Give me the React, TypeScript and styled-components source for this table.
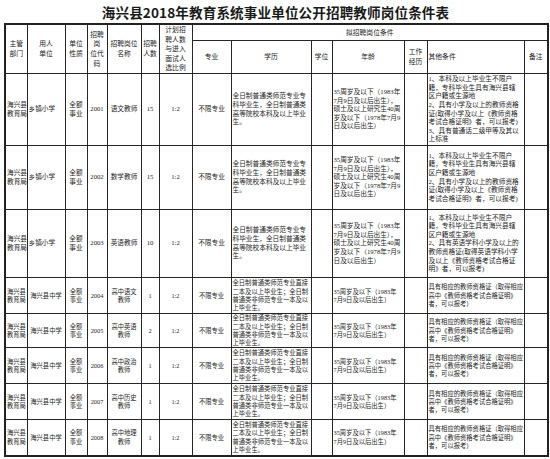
import React from "react";
import styled, { createGlobalStyle } from "styled-components";

const Global = createGlobalStyle`
  html, body { margin: 0; padding: 0; background: #fff; }
  body { width: 550px; height: 459px; overflow: hidden; }
`;

const Page = styled.div`
  width: 550px;
  height: 459px;
  display: flex;
  flex-direction: column;
  align-items: flex-start;
  padding-left: 4px;
  box-sizing: border-box;
`;

const Title = styled.h1`
  margin: 0;
  width: 543px;
  height: 23px;
  line-height: 24px;
  text-align: center;
  font-family: "Noto Sans CJK SC", sans-serif;
  font-weight: 700;
  font-size: 13.6px;
  color: #1a1a1a;
  letter-spacing: 0.1px;
`;

const Table = styled.table`
  border-collapse: collapse;
  table-layout: fixed;
  width: 543px;
  border: 2px solid #222;
  color: #1e1e1e;
`;

const HeadRow = styled.tr<{ $h: number }>`
  height: ${(p) => p.$h}px;
`;

const Th = styled.th<{ $align?: "left" | "center" }>`
  border: 1px solid #262626;
  padding: 0 1px;
  font-family: "Noto Sans CJK SC", sans-serif;
  font-weight: 400;
  font-size: 6.8px;
  --lh: 9.6px;
  text-align: ${(p) => p.$align ?? "center"};
  vertical-align: middle;
  white-space: nowrap;
  color: #222;
  overflow: hidden;
`;

const BodyRow = styled.tr<{ $h: number; $compact?: boolean }>`
  height: ${(p) => p.$h}px;
  font-size: ${(p) => (p.$compact ? "6.3px" : "6.7px")};
  --lh: ${(p) => (p.$compact ? "8.2px" : "8.6px")};
`;

const Td = styled.td<{ $align?: "left" | "center" }>`
  border: 1px solid #262626;
  padding: 0 1px;
  font-family: "Liberation Serif", "Noto Sans CJK SC", serif;
  font-weight: 400;
  text-align: ${(p) => p.$align ?? "center"};
  vertical-align: middle;
  white-space: nowrap;
  overflow: hidden;
  color: #1e1e1e;
`;

const Line = styled.span`
  display: block;
  height: var(--lh);
  line-height: var(--lh);
  overflow: visible;
`;

const Lines: React.FC<{ text: string[] }> = ({ text }) => (
  <>
    {text.map((t, i) => (
      <Line key={i}>{t}</Line>
    ))}
  </>
);

const cols = [22, 38, 22, 20, 34, 18, 33, 39, 80, 21, 72, 23, 97, 24];

type Row = {
  h: number;
  compact?: boolean;
  unit: string;
  code: string;
  name: string[];
  num: string;
  edu: string[];
  age: string[];
  other: string[];
};

const eduA = ["全日制普通类师范专业专", "科毕业生，全日制普通类", "高等院校本科及以上毕业", "生。"];
const ageA = [
  "35周岁及以下（1983年",
  "7月9日及以后出生），",
  "硕士及以上研究生40周",
  "岁及以下（1978年7月9",
  "日及以后出生）",
];
const eduB = ["全日制普通类师范专业直接", "二本及以上毕业生；全日制", "普通类非师范专业一本及以", "上毕业生。"];
const ageB = ["35周岁及以下（1983年", "7月9日及以后出生）"];
const otherB = ["具有相应的教师资格证（取得相应", "高中《教师资格考试合格证明》", "者，可以报考）"];
const otherHead = ["1、本科及以上毕业生不限户", "籍，专科毕业生具有海兴县辖", "区户籍或生源地"];

const rows: Row[] = [
  {
    h: 72,
    unit: "乡镇小学",
    code: "2001",
    name: ["语文教师"],
    num: "15",
    edu: eduA,
    age: ageA,
    other: [
      ...otherHead,
      "2、具有小学及以上的教师资格",
      "证(取得小学及以上《教师资格",
      "考试合格证明》者，可以报考)",
      "3、具有普通话二级甲等及其以",
      "上标准",
    ],
  },
  {
    h: 64,
    unit: "乡镇小学",
    code: "2002",
    name: ["数学教师"],
    num: "15",
    edu: eduA,
    age: ageA,
    other: [
      ...otherHead,
      "2、具有小学及以上的教师资格",
      "证(取得小学及以上《教师资格",
      "考试合格证明》者，可以报考)",
    ],
  },
  {
    h: 68,
    unit: "乡镇小学",
    code: "2003",
    name: ["英语教师"],
    num: "10",
    edu: eduA,
    age: ageA,
    other: [
      ...otherHead,
      "2、具有英语学科小学及以上的",
      "教师资格证(取得英语学科小学",
      "及以上《教师资格考试合格证",
      "明》者，可以报考)",
    ],
  },
  { h: 36, compact: true, unit: "海兴县中学", code: "2004", name: ["高中语文", "教师"], num: "1", edu: eduB, age: ageB, other: otherB },
  { h: 34, compact: true, unit: "海兴县中学", code: "2005", name: ["高中英语", "教师"], num: "2", edu: eduB, age: ageB, other: otherB },
  { h: 36, compact: true, unit: "海兴县中学", code: "2006", name: ["高中政治", "教师"], num: "1", edu: eduB, age: ageB, other: otherB },
  { h: 36, compact: true, unit: "海兴县中学", code: "2007", name: ["高中历史", "教师"], num: "1", edu: eduB, age: ageB, other: otherB },
  { h: 36, compact: true, unit: "海兴县中学", code: "2008", name: ["高中地理", "教师"], num: "1", edu: eduB, age: ageB, other: otherB },
];

export default function App() {
  return (
    <>
      <Global />
      <Page>
        <Title>海兴县2018年教育系统事业单位公开招聘教师岗位条件表</Title>
        <Table>
          <colgroup>
            {cols.map((w, i) => (
              <col key={i} style={{ width: w }} />
            ))}
          </colgroup>
          <thead>
            <HeadRow $h={16}>
              <Th rowSpan={2}><Lines text={["主管", "部门"]} /></Th>
              <Th rowSpan={2}><Lines text={["用人", "单位"]} /></Th>
              <Th rowSpan={2}><Lines text={["单位", "性质"]} /></Th>
              <Th rowSpan={2}><Lines text={["招聘", "岗", "位代", "码"]} /></Th>
              <Th rowSpan={2}><Lines text={["招聘岗位", "名称"]} /></Th>
              <Th rowSpan={2}><Lines text={["招聘", "人数"]} /></Th>
              <Th rowSpan={2}><Lines text={["计划招", "聘人数", "与进入", "面试人", "选比例"]} /></Th>
              <Th colSpan={7}><Lines text={["拟招聘岗位条件"]} /></Th>
            </HeadRow>
            <HeadRow $h={33}>
              <Th><Lines text={["专业"]} /></Th>
              <Th><Lines text={["学历"]} /></Th>
              <Th><Lines text={["学位"]} /></Th>
              <Th><Lines text={["年龄"]} /></Th>
              <Th><Lines text={["工作", "经历"]} /></Th>
              <Th $align="left"><Lines text={["其他条件"]} /></Th>
              <Th><Lines text={["备注"]} /></Th>
            </HeadRow>
          </thead>
          <tbody>
            {rows.map((r) => (
              <BodyRow key={r.code} $h={r.h} $compact={r.compact}>
                <Td><Lines text={["海兴县", "教育局"]} /></Td>
                <Td $align={r.compact ? "center" : "left"}><Lines text={[r.unit]} /></Td>
                <Td><Lines text={["全额", "事业"]} /></Td>
                <Td><Lines text={[r.code]} /></Td>
                <Td><Lines text={r.name} /></Td>
                <Td><Lines text={[r.num]} /></Td>
                <Td><Lines text={["1:2"]} /></Td>
                <Td><Lines text={["不限专业"]} /></Td>
                <Td $align="left"><Lines text={r.edu} /></Td>
                <Td />
                <Td $align="left"><Lines text={r.age} /></Td>
                <Td />
                <Td $align="left"><Lines text={r.other} /></Td>
                <Td />
              </BodyRow>
            ))}
          </tbody>
        </Table>
      </Page>
    </>
  );
}
